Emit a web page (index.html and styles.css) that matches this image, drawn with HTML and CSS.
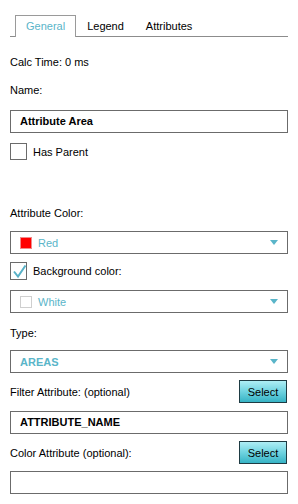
FILE: index.html
```html
<!DOCTYPE html>
<html>
<head>
<meta charset="utf-8">
<link rel="stylesheet" href="styles.css">
</head>
<body>
<div class="panel">
  <div class="tabs">
    <div class="tab active">General</div>
    <div class="tab">Legend</div>
    <div class="tab">Attributes</div>
  </div>

  <div class="label calc">Calc Time: 0 ms</div>
  <div class="label name-label">Name:</div>
  <div class="input name-input bold">Attribute Area</div>

  <div class="check-row parent-row">
    <span class="checkbox"></span>
    <span class="check-label">Has Parent</span>
  </div>

  <div class="label color-label">Attribute Color:</div>
  <div class="select red-select">
    <span class="swatch red"></span>
    <span class="select-text">Red</span>
    <span class="arrow"></span>
  </div>

  <div class="check-row bg-row">
    <span class="checkbox">
      <svg class="tick" width="17" height="17" viewBox="0 0 17 17"><path d="M3 8.5 L7 13.5 L14.5 2.5" fill="none" stroke="#58b1c7" stroke-width="2"/></svg>
    </span>
    <span class="check-label">Background color:</span>
  </div>
  <div class="select white-select">
    <span class="swatch white"></span>
    <span class="select-text">White</span>
    <span class="arrow"></span>
  </div>

  <div class="label type-label">Type:</div>
  <div class="select type-select">
    <span class="select-text bold">AREAS</span>
    <span class="arrow"></span>
  </div>

  <div class="btn-row filter-row">
    <span class="row-label">Filter Attribute: (optional)</span>
    <button class="select-btn">Select</button>
  </div>
  <div class="input attr-input bold">ATTRIBUTE_NAME</div>

  <div class="btn-row colorattr-row">
    <span class="row-label">Color Attribute (optional):</span>
    <button class="select-btn">Select</button>
  </div>
  <div class="input last-input"></div>
</div>
</body>
</html>
```
FILE: styles.css
```css
* { box-sizing: border-box; }
html, body { margin: 0; padding: 0; background: #fff; }
body {
  font-family: "Liberation Sans", Arial, sans-serif;
  font-size: 11px;
  color: #000;
}
.panel {
  width: 298px;
  padding: 15px 10px 10px 10px;
}
.tabs {
  display: flex;
  padding-left: 5px;
  border-bottom: 1px solid #8c8c8c;
  height: 22px;
}
.tab {
  border: 1px solid transparent;
  border-bottom: none;
  padding: 0 10px;
  line-height: 20px;
  height: 21px;
  color: #000;
}
.tab.active {
  border-color: #9a9a9a;
  background: #fff;
  color: #5ab5c9;
  height: 22px;
  position: relative;
  z-index: 1;
}
.label { line-height: 14px; }
.calc { margin-top: 18px; }
.name-label { margin-top: 14px; }
.bold { font-weight: bold; }
.input {
  height: 23px;
  border: 1px solid #6b6b6b;
  padding-left: 9px;
  line-height: 21px;
  width: 278px;
}
.name-input { margin-top: 13px; }
.check-row {
  display: flex;
  align-items: center;
  height: 17px;
}
.parent-row { margin-top: 10px; }
.bg-row { margin-top: 8px; height: 18px; }
.checkbox {
  width: 17px;
  height: 17px;
  border: 1px solid #6b6b6b;
  position: relative;
  flex: none;
}
.bg-row .checkbox { height: 18px; }
.tick { position: absolute; left: 0; top: 0; }
.check-label { margin-left: 6px; }
.color-label { margin-top: 46px; }
.select {
  height: 23px;
  border: 1px solid #6b6b6b;
  display: flex;
  align-items: center;
  padding-left: 9px;
  padding-right: 9px;
  width: 278px;
}
.red-select { margin-top: 11px; }
.white-select { margin-top: 10px; }
.type-label { margin-top: 13px; }
.type-select { margin-top: 10px; }
.swatch {
  width: 12px;
  height: 12px;
  margin-right: 6px;
  flex: none;
}
.swatch.red { background: #f00; border: 1px solid #f18a8a; }
.swatch.white { background: #fff; border: 1px solid #cfcfcf; }
.select-text { color: #5ab5c9; flex: 1; }
.arrow {
  width: 0;
  height: 0;
  border-left: 4px solid transparent;
  border-right: 4px solid transparent;
  border-top: 5px solid #5ab5c9;
  flex: none;
}
.btn-row {
  display: flex;
  align-items: center;
  justify-content: space-between;
  height: 23px;
  width: 278px;
  padding-right: 1px;
}
.filter-row { margin-top: 7px; }
.colorattr-row { margin-top: 7px; }
.attr-input { margin-top: 8px; }
.last-input { margin-top: 7px; }
.select-btn {
  width: 48px;
  height: 23px;
  border: 1px solid #1e3b43;
  background: linear-gradient(to bottom, #aeeef5 0%, #6fd3e0 50%, #36b3c5 100%);
  font-family: "Liberation Sans", Arial, sans-serif;
  font-size: 11px;
  color: #000;
  padding: 0;
  margin: 0;
}
```
